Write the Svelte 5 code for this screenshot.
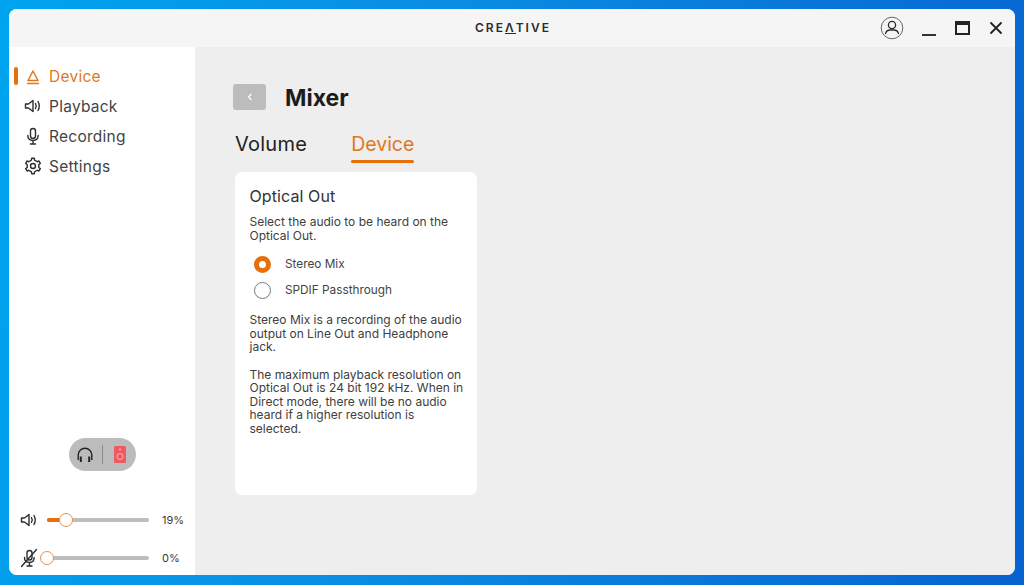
<script>
  const nav = [
    { label: 'Device', icon: 'device', active: true },
    { label: 'Playback', icon: 'speaker' },
    { label: 'Recording', icon: 'mic' },
    { label: 'Settings', icon: 'gear' }
  ]
  const sliders = [
    { icon: 'speaker', value: 19 },
    { icon: 'muted', value: 0 }
  ]

  // six toothed gear outline
  function gearPath() {
    const pts = []
    for (let i = 0; i < 6; i++) {
      const a = i * 60 - 90
      for (const [d, r] of [[-30, 5.8], [-15, 6], [-10, 7.8], [10, 7.8], [15, 6]]) {
        const t = ((a + d) * Math.PI) / 180
        pts.push((10 + r * Math.cos(t)).toFixed(2) + ' ' + (10 + r * Math.sin(t)).toFixed(2))
      }
    }
    return 'M' + pts.join(' L') + ' Z'
  }
</script>

{#snippet icon(name)}
  <svg class="ico" viewBox="0 0 20 20" fill="none" stroke="currentColor" stroke-width="1.4" stroke-linejoin="round" stroke-linecap="round">
    {#if name === 'device'}
      <path d="M10 5 L15 14.500 H5 Z" stroke-width="1.500" />
      <path d="M4.500 17.600 H15.500" stroke-width="1.500" />
    {:else if name === 'speaker'}
      <path d="M2.500 8 H5.500 L10 4.500 V15.500 L5.500 12 H2.500 Z" />
      <path d="M12.500 7.500 Q14 10 12.500 12.500" />
      <path d="M15 5.500 Q17.500 10 15 14.500" />
    {:else if name === 'mic'}
      <rect x="7.500" y="2.500" width="5" height="10" rx="2.500" />
      <path d="M4.800 9.500 Q5 14.500 10 14.500 Q15 14.500 15.200 9.500 M10 14.500 V18 M7.500 18 H12.500" />
    {:else if name === 'gear'}
      <circle cx="10" cy="10" r="2.500" />
      <path d={gearPath()} />
    {:else if name === 'muted'}
      <rect x="8" y="2.500" width="5" height="9.500" rx="2.500" />
      <path d="M5.500 9.500 Q5.500 14.500 10.500 14.500 Q15 14.500 15.200 9.500 M10.500 14.500 V18 M8 18 H13" />
      <path d="M2.500 18.500 L17.500 1.500" />
    {/if}
  </svg>
{/snippet}

<div class="desktop">
  <div class="window">
    <header class="titlebar">
      <div class="logo">CRE<span class="logo-a">Λ</span>TIVE</div>
      <div class="controls">
        <svg class="user" viewBox="0 0 24 24" fill="none" stroke="#2a2a2a" stroke-width="1.300">
          <circle cx="12" cy="12" r="10.800" stroke="#666" stroke-width="1" />
          <circle cx="12" cy="9" r="3.600" />
          <path d="M5.500 18 Q6 14.500 9.500 14 H14.500 Q18 14.500 18.500 18" />
        </svg>
        <span class="min"></span>
        <span class="max"></span>
        <svg class="close" viewBox="0 0 14 14" stroke="#222" stroke-width="1.800" fill="none">
          <path d="M1.500 1.500 L12.500 12.500 M12.500 1.500 L1.500 12.500" />
        </svg>
      </div>
    </header>

    <div class="body">
      <aside class="sidebar">
        <nav class="nav">
          {#each nav as item}
            <div class="nav-item" class:active={item.active}>
              <span class="marker"></span>
              {@render icon(item.icon)}
              <span>{item.label}</span>
            </div>
          {/each}
        </nav>

        <div class="output-wrap">
          <div class="output">
            <svg class="phones" viewBox="2 2 16 16" fill="none" stroke="#222" stroke-width="1.400">
              <path d="M3.200 15 V10 A6.800 6.800 0 0 1 16.800 10 V15" />
              <path d="M5.800 11.500 V17 M14.200 11.500 V17" stroke-width="2" />
            </svg>
            <span class="sep"></span>
            <svg class="box" viewBox="0 0 12 17">
              <rect width="12" height="17" rx="1.500" fill="#ee5a5f" />
              <circle cx="6" cy="3.500" r="1" fill="#f7b4b4" />
              <circle cx="6" cy="10.500" r="3" fill="none" stroke="#f7b4b4" stroke-width="1" />
            </svg>
          </div>
        </div>

        <div class="sliders">
          {#each sliders as s}
            <div class="slider-row">
              <span class="slider-icon">{@render icon(s.icon)}</span>
              <div class="track">
                <div class="fill" style="width: {s.value}%"></div>
                <div class="thumb" style="left: {s.value}%"></div>
              </div>
              <span class="value">{s.value}%</span>
            </div>
          {/each}
        </div>
      </aside>

      <main class="main">
        <div class="head">
          <button class="back" aria-label="Back">
            <svg viewBox="0 0 8 10" width="8" height="10" fill="none" stroke="#fff" stroke-width="1.200"><path d="M5.500 2 L2.500 5 L5.500 8" /></svg>
          </button>
          <h1>Mixer</h1>
        </div>

        <div class="tabs">
          <div class="tab">Volume</div>
          <div class="tab current">Device</div>
        </div>

        <section class="card">
          <h2>Optical Out</h2>
          <p>Select the audio to be heard on the Optical Out.</p>
          <div class="radios">
            <div class="radio-row"><span class="radio on"></span>Stereo Mix</div>
            <div class="radio-row"><span class="radio"></span>SPDIF Passthrough</div>
          </div>
          <p>Stereo Mix is a recording of the audio output on Line Out and Headphone jack.</p>
          <p class="gap">The maximum playback resolution on Optical Out is 24 bit 192 kHz. When in Direct mode, there will be no audio heard if a higher resolution is selected.</p>
        </section>
      </main>
    </div>
  </div>
</div>

<style>
  :global(body) {
    margin: 0;
    font-family: "Inter", "Open Sans", sans-serif;
  }
  .desktop {
    width: 1024px;
    height: 585px;
    box-sizing: border-box;
    padding: 9px 9px 10px 9px;
    background: linear-gradient(100deg, #00a4ee 0%, #0a8de4 40%, #0663cf 100%);
    overflow: hidden;
  }
  .window {
    height: 100%;
    display: flex;
    flex-direction: column;
    border-radius: 8px;
    overflow: hidden;
    background: #eeeeee;
  }
  .titlebar {
    position: relative;
    height: 38px;
    flex: none;
    background: #f5f5f5;
    display: flex;
    align-items: center;
    justify-content: flex-end;
  }
  .logo {
    position: absolute;
    left: 466px;
    top: 12px;
    font-size: 12px;
    line-height: 14px;
    font-weight: 600;
    letter-spacing: 2px;
    color: #2b2b2b;
  }
  .logo-a {
    border-bottom: 1.500px solid #2b2b2b;
    display: inline-block;
    line-height: 11px;
  }
  .controls {
    display: flex;
    align-items: center;
    padding-right: 12px;
  }
  .user { width: 24px; height: 24px; margin-right: 18px; }
  .min {
    width: 14px;
    height: 2px;
    background: #333;
    margin-top: 13px;
    margin-right: 19px;
  }
  .max {
    width: 11px;
    height: 8px;
    border: 2px solid #222;
    border-top-width: 4px;
    margin-right: 19px;
  }
  .close { width: 14px; height: 14px; }

  .body {
    flex: 1;
    display: flex;
    min-height: 0;
  }
  .sidebar {
    width: 186px;
    flex: none;
    background: #fff;
    display: flex;
    flex-direction: column;
  }
  .nav { padding-top: 14px; }
  .nav-item {
    height: 30px;
    display: flex;
    align-items: center;
    font-size: 15.500px;
    letter-spacing: 0.250px;
    color: #444;
  }
  .nav-item.active { color: #e2761b; }
  .marker {
    width: 4px;
    height: 18px;
    border-radius: 2px;
    margin-left: 5px;
    margin-right: 5px;
  }
  .active .marker { background: #e66f0c; }
  .ico {
    width: 20px;
    height: 20px;
    margin-right: 6px;
    flex: none;
    color: #2e2e2e;
  }
  .active .ico { color: #e2761b; }

  .output-wrap {
    margin-top: auto;
    display: flex;
    justify-content: center;
    margin-left: 1px;
  }
  .output {
    width: 67px;
    height: 33px;
    box-sizing: border-box;
    padding-right: 3px;
    background: #bcbcbc;
    border-radius: 17px;
    display: flex;
    align-items: center;
    justify-content: center;
    gap: 9px;
  }
  .phones { width: 16px; height: 16px; }
  .sep { width: 1px; height: 19px; background: #8a8a8a; }
  .box { width: 12px; height: 17px; margin-left: 2px; }

  .sliders { padding: 30px 0 0 0; }
  .slider-row {
    height: 38px;
    display: flex;
    align-items: center;
    font-size: 11px;
    color: #3a3a3a;
  }
  .slider-row:last-child { height: 36px; padding-top: 1px; box-sizing: border-box; }
  .slider-icon {
    margin-left: 10px;
    width: 28px;
    display: flex;
    color: #2e2e2e;
  }
  .track {
    position: relative;
    width: 102px;
    height: 4px;
    background: #bdbdbd;
    border-radius: 2px;
    margin-right: 13px;
  }
  .fill {
    position: absolute;
    left: 0;
    top: 0;
    bottom: 0;
    background: #e66f0c;
    border-radius: 2px;
  }
  .thumb {
    position: absolute;
    top: -5px;
    width: 14px;
    height: 14px;
    box-sizing: border-box;
    margin-left: -7.500px;
    border: 1px solid #e8924a;
    border-radius: 50%;
    background: #fff;
  }

  .main {
    flex: 1;
    padding: 37px 0 0 38px;
    background: #eeeeee;
  }
  .head {
    display: flex;
    align-items: center;
    height: 26px;
  }
  .back {
    width: 33px;
    height: 26px;
    padding: 0;
    border: none;
    border-radius: 3px;
    background: #bcbcbc;
    display: flex;
    align-items: center;
    justify-content: center;
  }
  h1 {
    margin: 2px 0 0 19px;
    font-size: 23px;
    line-height: 26px;
    font-weight: 700;
    color: #1c1c1c;
  }
  .tabs {
    display: flex;
    gap: 44px;
    margin-top: 22px;
    margin-left: 2px;
  }
  .tab {
    font-size: 20px;
    letter-spacing: 0.250px;
    line-height: 24px;
    height: 31px;
    color: #222;
  }
  .tab.current {
    font-size: 19.500px;
    letter-spacing: 0;
    color: #e2761b;
    position: relative;
  }
  .tab.current::after {
    content: "";
    position: absolute;
    left: 0;
    right: 0;
    bottom: 0;
    height: 3px;
    border-radius: 2px;
    background: #e66f0c;
  }
  .card {
    width: 242px;
    height: 323px;
    box-sizing: border-box;
    margin-top: 9px;
    margin-left: 2px;
    padding: 15px 12px 0 14.500px;
    background: #fff;
    border-radius: 7px;
    color: #333;
  }
  h2 {
    margin: 0 0 10px 0;
    font-size: 16px;
    letter-spacing: 0.100px;
    line-height: 18px;
    font-weight: 400;
    color: #333;
  }
  p {
    margin: 0;
    font-size: 12px;
    line-height: 13.500px;
    color: #404040;
  }
  p.gap { margin-top: 14px; }
  .radios {
    padding: 9px 0 10px 4.500px;
  }
  .radio-row {
    height: 26px;
    display: flex;
    align-items: center;
    font-size: 11.800px;
    color: #444;
  }
  .radio {
    width: 17px;
    height: 17px;
    box-sizing: border-box;
    border: 1px solid #777;
    border-radius: 50%;
    margin-right: 14px;
    background: #fff;
  }
  .radio.on {
    border: 5.500px solid #e66f0c;
  }
  .value { white-space: nowrap; }
</style>
